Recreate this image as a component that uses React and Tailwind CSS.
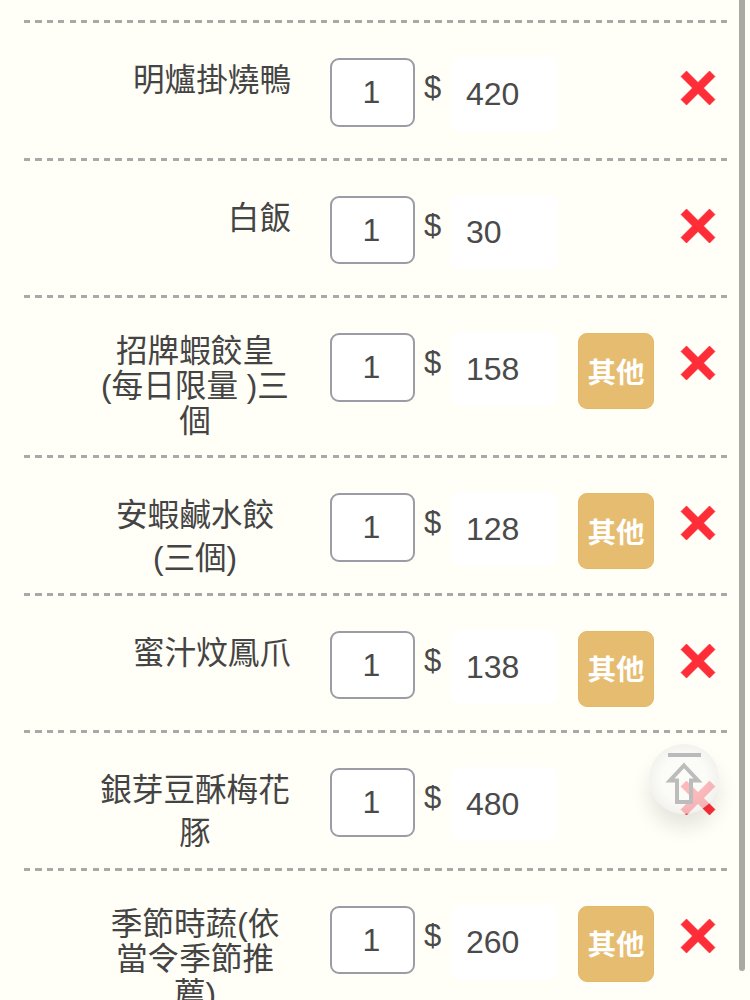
const ITEMS = [
  { name: "明爐掛燒鴨", price: "420" },
  { name: "白飯", price: "30" },
  { name: "招牌蝦餃皇 (每日限量 )三個", price: "158", other: true, tight: true },
  { name: "安蝦鹹水餃 (三個)", price: "128", other: true },
  { name: "蜜汁炆鳳爪", price: "138", other: true },
  { name: "銀芽豆酥梅花豚", price: "480" },
  { name: "季節時蔬(依當令季節推薦)", price: "260", other: true, tight: true },
];

function Cross() {
  return (
    <svg viewBox="0 0 36 36" className="h-[36px] w-[36px]">
      <path d="M6.5 1 18 12.5 29.5 1 35 6.5 23.5 18 35 29.5 29.5 35 18 23.5 6.5 35 1 29.5 12.5 18 1 6.5Z" fill="#ff2d38" stroke="#f0202c" strokeWidth="0.6" />
    </svg>
  );
}

function Row({ item }) {
  return (
    <div>
      <div className="h-[3px] bg-[repeating-linear-gradient(90deg,#a9a9a9_0,#a9a9a9_6.2px,transparent_6.2px,transparent_11.43px)]" />
      <div className="flex items-start pt-[35px]">
        <div className="flex w-[267px] shrink-0 justify-end">
          <div className={`mt-[1px] max-w-[192px] text-center text-[31.6px] text-[#444] ${item.tight ? "mb-[16px] leading-[35px]" : "mb-[12px] leading-[43px]"}`}>
            {item.name}
          </div>
        </div>
        <div className="mb-[31px] ml-[39px] flex h-[68.5px] w-[85px] shrink-0 items-center justify-center rounded-[9px] border-2 border-[#9c9ca6] bg-white pr-[2px] text-[32px] text-[#4a4a4a]">
          1
        </div>
        <div className="ml-[9px] w-[26px] shrink-0 text-[31px] leading-[60px] text-[#4a4a4a]">$</div>
        <div className="-mt-px flex h-[74px] w-[108px] shrink-0 items-center rounded-[10px] bg-white pl-[16px] text-[32px] text-[#4a4a4a]">
          {item.price}
        </div>
        {item.other && (
          <div className="ml-[20px] flex h-[76px] w-[76px] shrink-0 items-center justify-center rounded-[9px] border border-[#e3b968] bg-[#e6bd70] pt-[4px] text-[28.5px] font-bold text-white">
            其他
          </div>
        )}
        <div className={`mt-[12px] shrink-0 ${item.other ? "ml-[26px]" : "ml-[122px]"}`}>
          <Cross />
        </div>
      </div>
    </div>
  );
}

export default function App() {
  return (
    <div
      className="relative h-[1000px] w-[750px] overflow-hidden bg-[#fffef7]"
      style={{ fontFamily: '"Liberation Sans", "Noto Sans CJK TC", sans-serif' }}
    >
      <div className="ml-[24px] w-[703px] pt-[20px]">
        {ITEMS.map((item) => (
          <Row key={item.name} item={item} />
        ))}
      </div>
      <div className="absolute right-[5.5px] top-0 h-[971px] w-[5.5px] rounded-b-full bg-[#a9a8a3]" />
      <div className="absolute left-[649px] top-[744px] h-[70px] w-[70px] rounded-full bg-[radial-gradient(circle,rgba(250,250,248,0.68)_45%,rgba(222,222,220,0.7)_100%)] shadow-[0_14px_20px_rgba(0,0,0,0.1)]">
        <svg viewBox="0 0 70 70" className="h-[70px] w-[70px]">
          <rect x="19" y="9" width="33" height="4" fill="#bababa" />
          <path d="M35 21.5 49 36.5H42V58H28V36.5H21Z" fill="none" stroke="#bcbcbc" strokeWidth="4" />
        </svg>
      </div>
    </div>
  );
}
